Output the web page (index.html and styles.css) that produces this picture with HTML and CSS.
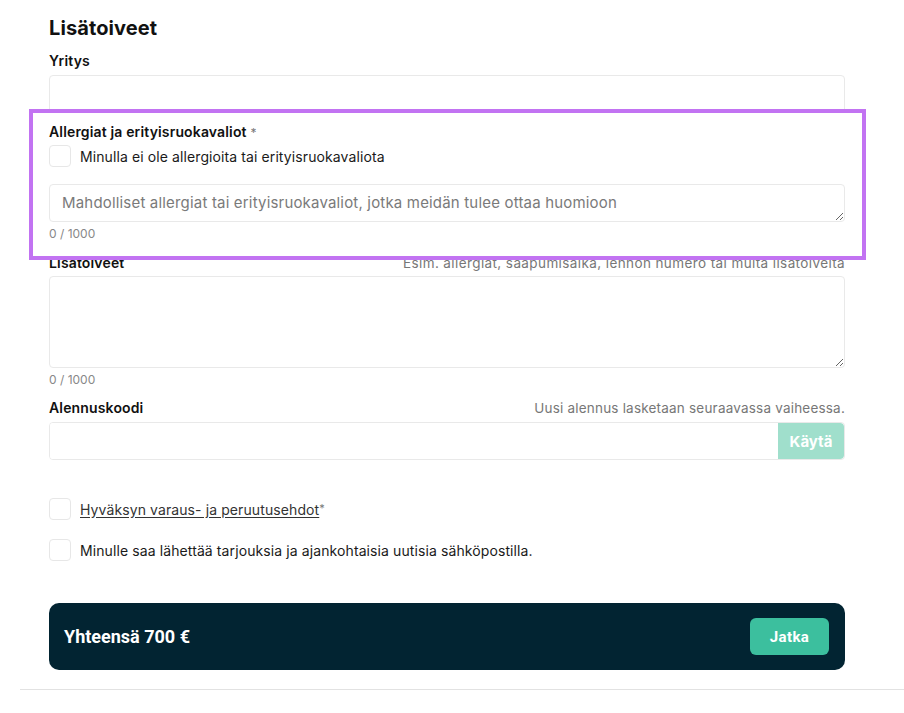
FILE: index.html
```html
<!DOCTYPE html>
<html lang="fi">
<head>
<meta charset="utf-8">
<title>Lisätoiveet</title>
<link rel="stylesheet" href="styles.css">
</head>
<body>
<div class="page">
  <form class="form">
    <h2 class="title">Lisätoiveet</h2>

    <div class="label-row first"><label class="label">Yritys</label></div>
    <input class="input" type="text">

    <section class="allergy">
      <div class="label-row tight"><label class="label">Allergiat ja erityisruokavaliot <span class="req">*</span></label></div>
      <label class="check-row check-allergy"><span class="box"></span><span class="check-text">Minulla ei ole allergioita tai erityisruokavaliota</span></label>
      <textarea class="textarea small" placeholder="Mahdolliset allergiat tai erityisruokavaliot, jotka meidän tulee ottaa huomioon"></textarea>
      <div class="counter">0 / 1000</div>
    </section>

    <div class="label-row after-allergy"><label class="label">Lisätoiveet</label><span class="hint hint-long">Esim. allergiat, saapumisaika, lennon numero tai muita lisätoiveita</span></div>
    <textarea class="textarea big"></textarea>
    <div class="counter">0 / 1000</div>

    <div class="label-row discount"><label class="label">Alennuskoodi</label><span class="hint">Uusi alennus lasketaan seuraavassa vaiheessa.</span></div>
    <div class="code-field"><input class="code-input" type="text"><button type="button" class="apply">Käytä</button></div>

    <label class="check-row terms"><span class="box"></span><span class="check-text"><a class="link" href="#">Hyväksyn varaus- ja peruutusehdot</a><span class="req">*</span></span></label>
    <label class="check-row news"><span class="box"></span><span class="check-text">Minulle saa lähettää tarjouksia ja ajankohtaisia uutisia sähköpostilla.</span></label>

    <div class="total-bar">
      <span class="total">Yhteensä 700 €</span>
      <button type="button" class="continue">Jatka</button>
    </div>
  </form>
  <hr class="rule">
</div>
</body>
</html>
```

FILE: styles.css
```css
* { box-sizing: border-box; }
html, body { margin: 0; background: #fff; }
body {
  font-family: Inter, "Noto Sans", "DejaVu Sans", sans-serif;
  color: #111;
  width: 904px;
  height: 713px;
  overflow: hidden;
}
.page { padding-left: 20px; }
.form {
  margin-left: 29px;
  width: 796px;
  padding-top: 16px;
  display: flex;
  flex-direction: column;
}
.title {
  margin: 0;
  font-size: 20px;
  line-height: 24px;
  font-weight: 700;
  letter-spacing: 0.1px;
}
.label-row {
  display: flex;
  justify-content: space-between;
  align-items: baseline;
  height: 18px;
  line-height: 18px;
}
.label-row.first { margin-top: 12px; }
.label-row.after-allergy { margin-top: 12px; }
.label-row.discount { margin-top: 11px; }
.label { font-size: 14px; font-weight: 600; letter-spacing: 0.15px; }
.req { color: #777; font-weight: 400; font-size: 12px; letter-spacing: 0; }
.hint { font-size: 13.5px; color: #777; letter-spacing: 0.2px; }
.hint-long { letter-spacing: 0.4px; }
.input {
  margin-top: 5px;
  height: 40px;
  border: 1px solid #e9e9e9;
  border-radius: 4px;
  font: inherit;
}
.allergy {
  margin-top: 8px;
  position: relative;
  z-index: 1;
  display: flex;
  flex-direction: column;
}
.allergy::before {
  content: "";
  position: absolute;
  top: -14px;
  left: -20px;
  right: -21px;
  bottom: -18px;
  border: 4px solid #c273f2;
  background: #fff;
  z-index: -1;
}
.check-row {
  display: flex;
  align-items: center;
  gap: 9px;
  height: 22px;
  font-size: 14px;
  letter-spacing: 0.1px;
  color: #1a1a1a;
}
.check-allergy { margin-top: 4px; }
.box {
  width: 22px;
  height: 22px;
  flex: none;
  border: 1px solid #e7e7e7;
  border-radius: 4px;
  background: #fff;
}
.textarea {
  display: block;
  width: 100%;
  border: 1px solid #e9e9e9;
  border-radius: 4px;
  font: inherit;
  padding: 9px 12px;
  resize: vertical;
}
.textarea::placeholder { color: #7a7a7a; }
.textarea.small { margin-top: 17px; height: 38px; font-size: 15px; line-height: 18px; letter-spacing: 0.18px; }
.textarea.big { margin-top: 4px; height: 92px; }
.counter {
  margin-top: 4px;
  font-size: 12px;
  line-height: 16px;
  color: #888;
}
.code-field {
  margin-top: 5px;
  height: 38px;
  display: flex;
  border: 1px solid #e9e9e9;
  border-radius: 4px;
  overflow: hidden;
}
.code-input { flex: 1; border: 0; font: inherit; outline: none; }
.apply {
  width: 66px;
  border: 0;
  background: #a0dfcc;
  color: #fff;
  font: inherit;
  font-weight: 700;
  font-size: 15px;
  border-radius: 0 4px 4px 0;
}
.terms { margin-top: 38px; }
.news { margin-top: 19px; }
.link { color: #333; text-decoration: underline; text-underline-offset: 2px; }
.terms .req { font-size: 11px; vertical-align: top; }
.total-bar {
  margin-top: 42px;
  height: 67px;
  background: #022432;
  border-radius: 10px;
  display: flex;
  align-items: center;
  justify-content: space-between;
  padding: 0 16px 0 15px;
}
.total {
  color: #fff;
  font-family: Roboto, "Liberation Sans", sans-serif;
  font-weight: 700;
  font-size: 18px;
  letter-spacing: 0;
}
.continue {
  width: 79px;
  height: 37px;
  border: 0;
  border-radius: 6px;
  background: #3cbf9e;
  color: #fff;
  font-family: Roboto, "Liberation Sans", sans-serif;
  font-weight: 700;
  font-size: 15px;
  letter-spacing: 0.4px;
}
.rule {
  margin: 19px 0 0 0;
  border: 0;
  border-top: 1px solid #e2e2e2;
  height: 0;
}
```
